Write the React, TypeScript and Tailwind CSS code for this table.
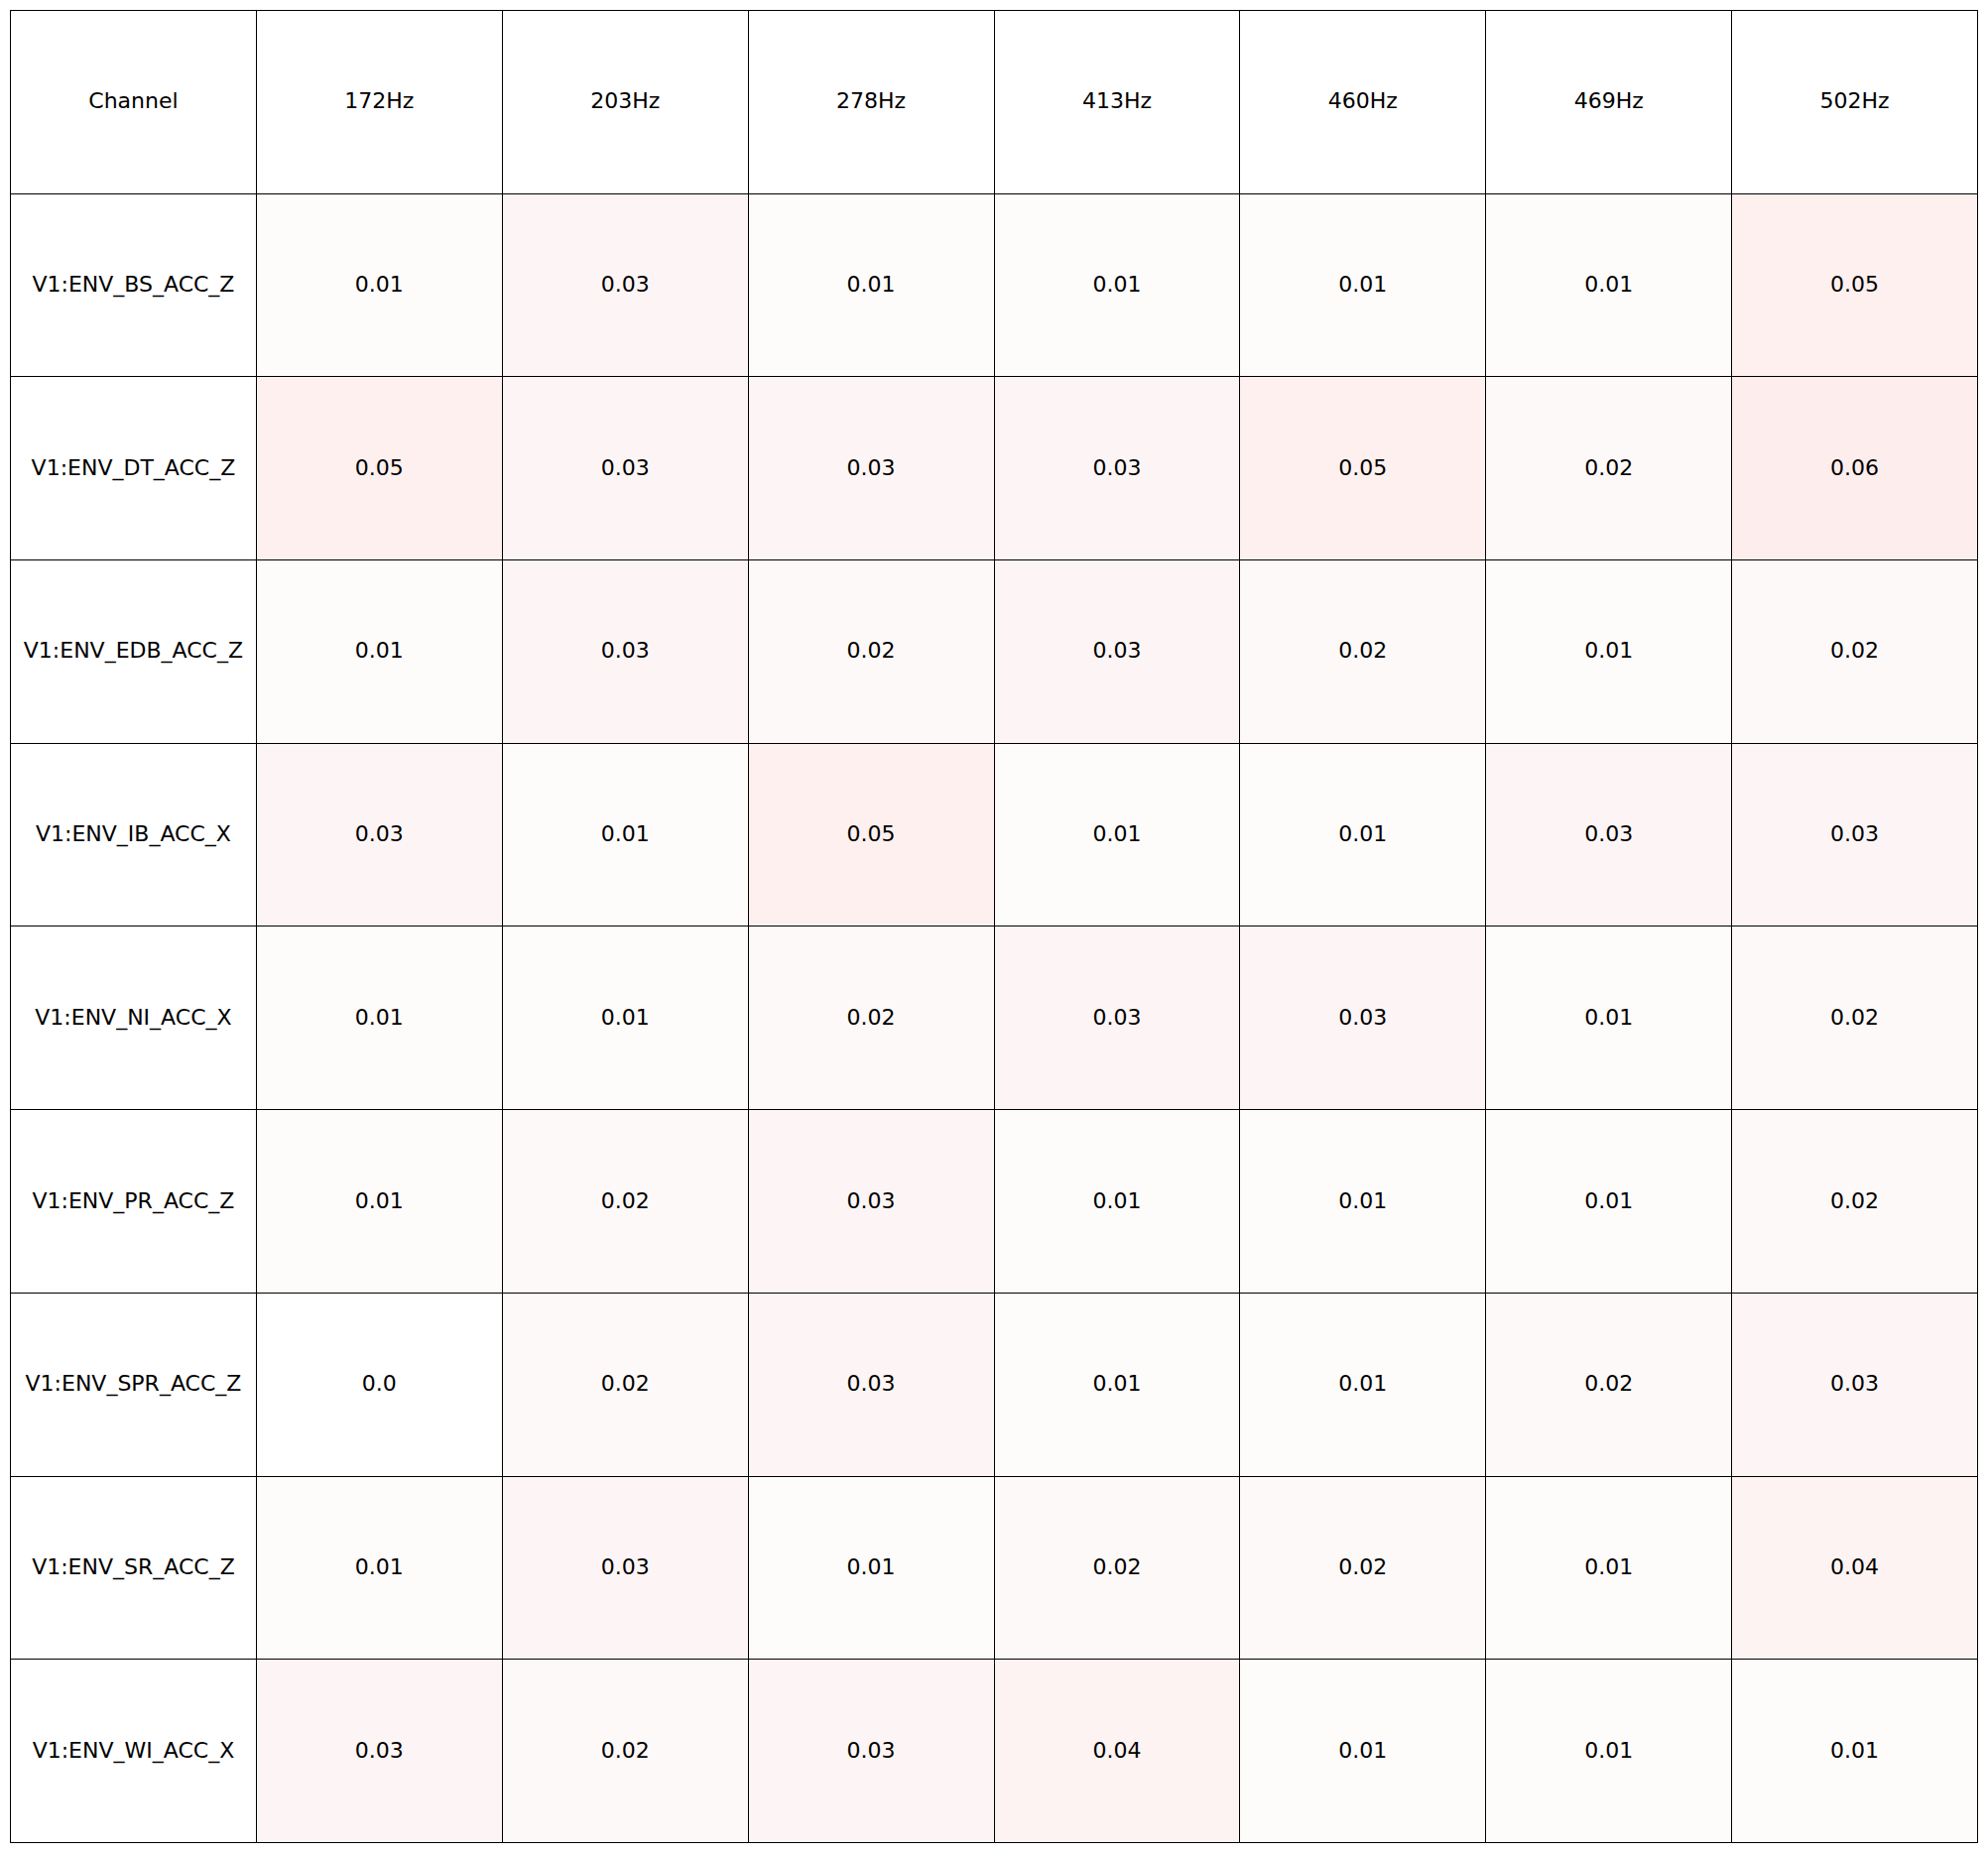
const headers = ["Channel", "172Hz", "203Hz", "278Hz", "413Hz", "460Hz", "469Hz", "502Hz"];

const rows: [string, string[]][] = [
    ["V1:ENV_BS_ACC_Z", ["0.01", "0.03", "0.01", "0.01", "0.01", "0.01", "0.05"]],
    ["V1:ENV_DT_ACC_Z", ["0.05", "0.03", "0.03", "0.03", "0.05", "0.02", "0.06"]],
    ["V1:ENV_EDB_ACC_Z", ["0.01", "0.03", "0.02", "0.03", "0.02", "0.01", "0.02"]],
    ["V1:ENV_IB_ACC_X", ["0.03", "0.01", "0.05", "0.01", "0.01", "0.03", "0.03"]],
    ["V1:ENV_NI_ACC_X", ["0.01", "0.01", "0.02", "0.03", "0.03", "0.01", "0.02"]],
    ["V1:ENV_PR_ACC_Z", ["0.01", "0.02", "0.03", "0.01", "0.01", "0.01", "0.02"]],
    ["V1:ENV_SPR_ACC_Z", ["0.0", "0.02", "0.03", "0.01", "0.01", "0.02", "0.03"]],
    ["V1:ENV_SR_ACC_Z", ["0.01", "0.03", "0.01", "0.02", "0.02", "0.01", "0.04"]],
    ["V1:ENV_WI_ACC_X", ["0.03", "0.02", "0.03", "0.04", "0.01", "0.01", "0.01"]],
];

// shade per value, written out so tailwind picks them up
const shade: Record<string, string> = {
    "0.0": "bg-white",
    "0.01": "bg-[#fefcfb]",
    "0.02": "bg-[#fdf9f8]",
    "0.03": "bg-[#fdf5f5]",
    "0.04": "bg-[#fdf3f2]",
    "0.05": "bg-[#fdf0ef]",
    "0.06": "bg-[#fdedec]",
};

const cell = "flex items-center justify-center pb-[2px] border-r border-b border-black text-[22px] text-black";

const App = () => {
    return (
        <div className="w-[2004px] h-[1868px] bg-white p-[10px]" style={{ fontFamily: '"DejaVu Sans", sans-serif' }}>
            <div className="grid grid-cols-8 grid-rows-10 w-[1984px] h-[1848px] border-l border-t border-black">
                {headers.map((h) => (
                    <div key={h} className={`${cell} bg-white`}>{h}</div>
                ))}
                {rows.map(([name, vals]) => (
                    <div key={name} className="contents">
                        <div className={`${cell} bg-white`}>{name}</div>
                        {vals.map((v, i) => (
                            <div key={i} className={`${cell} ${shade[v]}`}>{v}</div>
                        ))}
                    </div>
                ))}
            </div>
        </div>
    );
};

export default App;
